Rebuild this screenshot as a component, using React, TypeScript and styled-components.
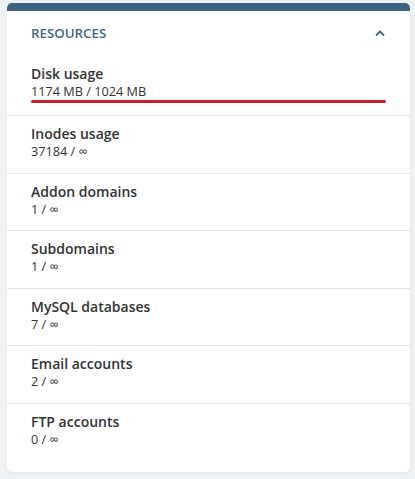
import React from "react";
import styled, { createGlobalStyle } from "styled-components";

const GlobalStyle = createGlobalStyle`
  html, body {
    margin: 0;
    padding: 0;
    background: #eef2f4;
    font-family: "Open Sans", "Noto Sans", sans-serif;
  }
`;

const Page = styled.div`
  padding: 3px 5px 7px 7px;
`;

const Card = styled.section`
  background: #fff;
  border-radius: 5px;
  overflow: hidden;
  box-shadow: 0 1px 3px rgba(0, 0, 0, 0.06);
  padding-bottom: 12px;
`;

const TopBar = styled.div`
  height: 8px;
  background: #3d6580;
`;

const Header = styled.div`
  display: flex;
  align-items: center;
  justify-content: space-between;
  padding: 13px 24px 14px;
`;

const Title = styled.h2`
  margin: 0;
  font-size: 13.3px;
  line-height: 18px;
  font-weight: 600;
  color: #3e6a87;
  text-transform: uppercase;
`;

const Toggle = styled.button`
  border: 0;
  background: none;
  padding: 0;
  width: 12px;
  height: 12px;
  display: flex;
  align-items: center;
  justify-content: center;
  color: #3e6a87;
  cursor: pointer;
`;

const Row = styled.div<{ $first?: boolean }>`
  padding: 8px 24px 13.5px;
  border-top: ${(p) => (p.$first ? "0" : "1px solid #e3e8ec")};
  padding-bottom: ${(p) => (p.$first ? "12px" : "13.5px")};
`;

const Label = styled.div`
  font-size: 14px;
  line-height: 19px;
  font-weight: 600;
  color: #333;
`;

const Value = styled.div`
  font-size: 12.7px;
  line-height: 16px;
  color: #333;
`;

const Bar = styled.div`
  margin-top: 1px;
  height: 3px;
  border-radius: 2px;
  background: #eee;
  overflow: hidden;
`;

const Fill = styled.div`
  height: 100%;
  background: #c81f28;
`;

const resources = [
  { label: "Disk usage", value: "1174 MB / 1024 MB", used: 1174, limit: 1024 },
  { label: "Inodes usage", value: "37184 / ∞" },
  { label: "Addon domains", value: "1 / ∞" },
  { label: "Subdomains", value: "1 / ∞" },
  { label: "MySQL databases", value: "7 / ∞" },
  { label: "Email accounts", value: "2 / ∞" },
  { label: "FTP accounts", value: "0 / ∞" },
];

export default function App() {
  return (
    <Page>
      <GlobalStyle />
      <Card>
        <TopBar />
        <Header>
          <Title>Resources</Title>
          <Toggle aria-label="Collapse">
            <svg width="10" height="7" viewBox="0 0 10 7">
              <polyline
                points="1,5.5 5,1.5 9,5.5"
                fill="none"
                stroke="currentColor"
                strokeWidth="1.8"
              />
            </svg>
          </Toggle>
        </Header>
        {resources.map((r, i) => (
          <Row key={r.label} $first={i === 0}>
            <Label>{r.label}</Label>
            <Value>{r.value}</Value>
            {r.limit && (
              <Bar>
                <Fill style={{ width: `${Math.min(100, (r.used! / r.limit) * 100)}%` }} />
              </Bar>
            )}
          </Row>
        ))}
      </Card>
    </Page>
  );
}
